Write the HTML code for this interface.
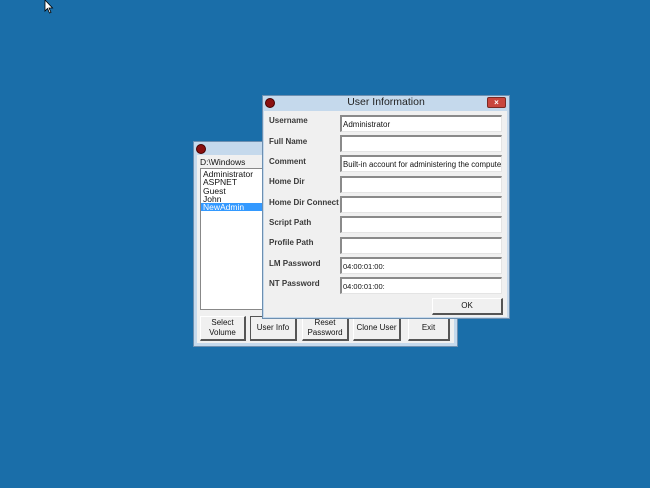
<!DOCTYPE html>
<html><head><meta charset="utf-8"><style>
*{margin:0;padding:0;box-sizing:border-box}
body{width:650px;height:488px;background:#1a6ea9;position:relative;overflow:hidden;font-family:"Liberation Sans",sans-serif;font-size:8px;color:#111}
.a{position:absolute}
.win{background:#c5d9ec;border:1px solid #6d8fb0}
.body{background:#f0f0f0}
.dot{width:10px;height:10px;border-radius:50%;background:#8a1010;border:1px solid #400}
.tb{background:#fff;border-top:2px solid #8a8a8a;border-left:2px solid #8a8a8a;border-right:1px solid #e4e4e4;border-bottom:1px solid #e4e4e4;height:17px;width:162px;left:340px;font-size:8px;padding:3px 1px;white-space:nowrap;overflow:hidden}
.lb{left:269px;font-size:8px;font-weight:600;color:#3a3a3a}
.btn{background:#f0f0f0;border-right:2px solid #555;border-bottom:2px solid #555;border-top:1px solid #fff;border-left:1px solid #fff;text-align:center;font-size:8px;display:flex;align-items:center;justify-content:center;line-height:1.2}
</style></head><body>
<svg class="a" style="left:44px;top:0" width="10" height="14"><path d="M1 0 L1 11 L3.5 8.5 L5.5 13 L7 12.3 L5 8 L8.5 8 Z" fill="#fff" stroke="#000" stroke-width="0.8"/></svg>

<div class="a win" style="left:193px;top:141px;width:265px;height:206px"></div>
<div class="a dot" style="left:196px;top:144px"></div>
<div class="a body" style="left:197px;top:155px;width:257px;height:188px"></div>
<div class="a" style="left:200px;top:157px;font-size:8.5px">D:\Windows</div>
<div class="a" style="left:200px;top:168px;width:64px;height:142px;background:#fff;border:1px solid #888;font-size:8.5px;line-height:8.3px;padding-top:1px">
<div style="padding-left:2px">Administrator</div><div style="padding-left:2px">ASPNET</div><div style="padding-left:2px">Guest</div><div style="padding-left:2px">John</div><div style="padding-left:2px;background:#3399ff;color:#fff">NewAdmin</div></div>
<div class="a btn" style="left:200px;top:316px;width:46px;height:25px">Select<br>Volume</div>
<div class="a btn" style="left:250px;top:316px;width:47px;height:25px;border-top:1px solid #555;border-left:1px solid #555">User Info</div>
<div class="a btn" style="left:302px;top:316px;width:47px;height:25px">Reset<br>Password</div>
<div class="a btn" style="left:353px;top:316px;width:48px;height:25px">Clone User</div>
<div class="a btn" style="left:408px;top:316px;width:42px;height:25px">Exit</div>

<div class="a win" style="left:262px;top:95px;width:248px;height:224px"></div>
<div class="a dot" style="left:265px;top:98px"></div>
<div class="a" style="left:262px;top:96px;width:248px;text-align:center;font-size:10.5px;color:#222">User Information</div>
<div class="a" style="left:487px;top:97px;width:19px;height:11px;background:#c9463d;border:1px solid #7a2a24;border-radius:2px;color:#fff;font-size:8px;text-align:center;line-height:9px;font-weight:bold">×</div>
<div class="a body" style="left:264px;top:111px;width:243px;height:206px"></div>

<div class="a lb" style="top:116px">Username</div><div class="a tb" style="top:115px">Administrator</div>
<div class="a lb" style="top:137px">Full Name</div><div class="a tb" style="top:135px"></div>
<div class="a lb" style="top:157px">Comment</div><div class="a tb" style="top:155px;font-size:7.8px">Built-in account for administering the computer/</div>
<div class="a lb" style="top:177px">Home Dir</div><div class="a tb" style="top:176px"></div>
<div class="a lb" style="top:198px">Home Dir Connect</div><div class="a tb" style="top:196px"></div>
<div class="a lb" style="top:218px">Script Path</div><div class="a tb" style="top:216px"></div>
<div class="a lb" style="top:238px">Profile Path</div><div class="a tb" style="top:237px"></div>
<div class="a lb" style="top:259px">LM Password</div><div class="a tb" style="top:257px;font-size:7.5px">04:00:01:00:</div>
<div class="a lb" style="top:279px">NT Password</div><div class="a tb" style="top:277px;font-size:7.5px">04:00:01:00:</div>
<div class="a btn" style="left:432px;top:298px;width:71px;height:17px">OK</div>
</body></html>
